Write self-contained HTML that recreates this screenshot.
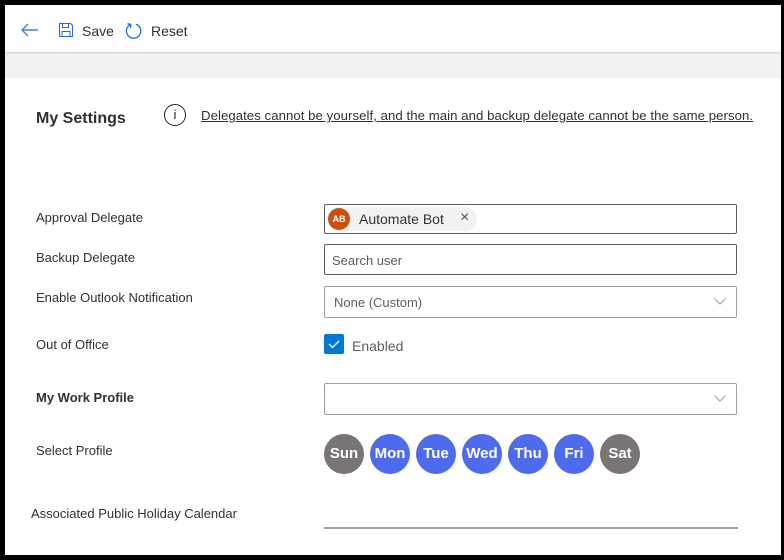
<!DOCTYPE html><html><head><style>
body{margin:0;width:784px;height:560px;background:#000;font-family:"Liberation Sans",sans-serif;overflow:hidden;position:relative}
.f{position:absolute;left:5px;top:5px;width:776px;height:550px;background:#f3f2f1}
.tb{position:absolute;left:0;top:0;width:776px;height:47px;background:#fff;box-shadow:0 1px 2px rgba(0,0,0,.15)}
.ct{position:absolute;left:0;top:73px;width:776px;height:477px;background:#fff}
.a{position:absolute;font-size:13px;color:#323130;white-space:nowrap}
.box{position:absolute;left:319px;width:413px;border:1px solid #605e5c;border-radius:2px;background:#fff;box-sizing:border-box}
.d{position:absolute;top:429px;width:40px;height:40px;border-radius:50%;color:#fff;font-weight:bold;font-size:15px;text-align:center;line-height:40px}
.chev{position:absolute;right:10px;top:11px}
</style></head><body><div class="f">
<div class="tb">
<svg style="position:absolute;left:16px;top:18px" width="18" height="14" viewBox="0 0 18 14"><path d="M17 7H2M7 1L1 7l6 6" fill="none" stroke="#4a7fd4" stroke-width="1.4"/></svg>
<svg style="position:absolute;left:54px;top:18px" width="14" height="14" viewBox="0 0 14 14"><path d="M.5.5h11l2 2v11H.5z M3.5.5v4h6v-4 M3 13.5v-5h8v5" fill="none" stroke="#1f6fd0" stroke-width="1"/></svg>
<div class="a" style="left:77px;top:18px;font-size:14px">Save</div>
<svg style="position:absolute;left:120px;top:17px" width="18" height="18" viewBox="0 0 18 18"><path d="M6 2.3A7.2 7.2 0 1 0 11 2.2M6 2.3L5.5 6M6 2.3L2.5 1.8" fill="none" stroke="#1f6fd0" stroke-width="1.3"/></svg>
<div class="a" style="left:146px;top:18px;font-size:14px">Reset</div>
</div>
<div class="ct"></div>
<div class="a" style="left:31px;top:105px;font-size:16px;font-weight:bold;color:#323130">My Settings</div>
<div style="position:absolute;left:159px;top:99px;width:22px;height:22px;border:1.5px solid #222;border-radius:50%;box-sizing:border-box;text-align:center;font-size:13px;line-height:19px;color:#222">i</div>
<div class="a" style="left:196px;top:103px;font-size:13.2px;letter-spacing:0.05px;text-decoration:underline;color:#323130">Delegates cannot be yourself, and the main and backup delegate cannot be the same person.</div>
<div class="a" style="left:31px;top:205px">Approval Delegate</div>
<div class="a" style="left:31px;top:245px">Backup Delegate</div>
<div class="a" style="left:31px;top:285px">Enable Outlook Notification</div>
<div class="a" style="left:31px;top:332px">Out of Office</div>
<div class="a" style="left:31px;top:385px;font-weight:bold">My Work Profile</div>
<div class="a" style="left:31px;top:438px">Select Profile</div>
<div class="a" style="left:26px;top:501px">Associated Public Holiday Calendar</div>
<div class="box" style="top:199px;height:30px">
<div style="position:absolute;left:2px;top:2px;width:150px;height:24px;border-radius:12px;background:#f3f2f1"></div>
<div style="position:absolute;left:3px;top:3px;width:22px;height:22px;border-radius:50%;background:#ca5010;color:#fff;font-size:9px;font-weight:bold;text-align:center;line-height:22px">AB</div>
<div class="a" style="left:34px;top:6px;font-size:14px">Automate Bot</div>
<div class="a" style="left:135px;top:4px;font-size:16px;color:#555">×</div>
</div>
<div class="box" style="top:239px;height:31px"><div class="a" style="left:7px;top:8px;color:#605e5c">Search user</div></div>
<div class="box" style="top:281px;height:32px;border-color:#a19f9d"><div class="a" style="left:9px;top:8px;color:#605e5c">None (Custom)</div>
<svg class="chev" width="12" height="7" viewBox="0 0 12 7"><path d="M.5.5l5.5 5.5 5.5-5.5" fill="none" stroke="#a19f9d"/></svg></div>
<div style="position:absolute;left:319px;top:329px;width:20px;height:20px;background:#0078d4;border-radius:2px"><svg width="20" height="20" viewBox="0 0 20 20"><path d="M5 10l3.5 3.5L15 7" fill="none" stroke="#fff" stroke-width="1.3"/></svg></div>
<div class="a" style="left:347px;top:333px;font-size:14px;color:#605e5c">Enabled</div>
<div class="box" style="top:378px;height:32px;border-color:#a19f9d"><svg class="chev" width="12" height="7" viewBox="0 0 12 7"><path d="M.5.5l5.5 5.5 5.5-5.5" fill="none" stroke="#a19f9d"/></svg></div>
<div class="d" style="left:319px;background:#7a7574">Sun</div>
<div class="d" style="left:365px;background:#4f6bed">Mon</div>
<div class="d" style="left:411px;background:#4f6bed">Tue</div>
<div class="d" style="left:457px;background:#4f6bed">Wed</div>
<div class="d" style="left:503px;background:#4f6bed">Thu</div>
<div class="d" style="left:549px;background:#4f6bed">Fri</div>
<div class="d" style="left:595px;background:#7a7574">Sat</div>
<div style="position:absolute;left:319px;top:522px;width:414px;height:2px;background:#a19f9d"></div>
</div></body></html>
